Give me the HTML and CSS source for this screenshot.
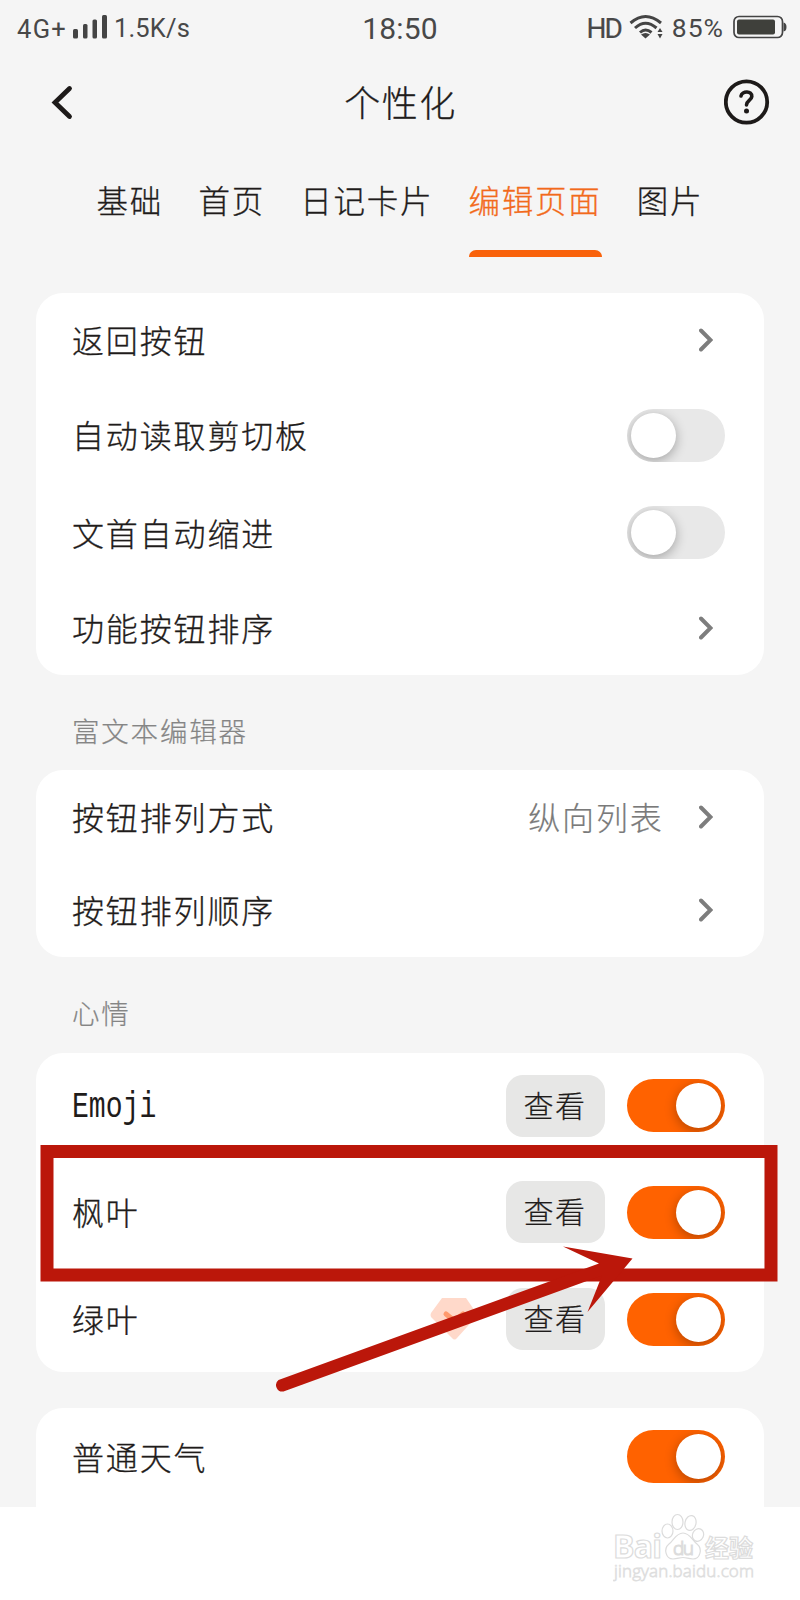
FILE: index.html
```html
<!DOCTYPE html>
<html lang="zh-CN">
<head>
<meta charset="utf-8">
<title>个性化</title>
<link rel="stylesheet" href="styles.css">
</head>
<body>
<main class="screen">
  <header class="status">
    <div class="status-left">
      <span class="network">4G+</span>
      <svg class="signal" width="35" height="24" viewBox="0 0 35 24"><g fill="#444"><rect x="0" y="14" width="5" height="9.500" rx="1.500"/><rect x="10" y="9" width="4.500" height="14.500" rx="1.500"/><rect x="19.500" y="4.500" width="4.500" height="19" rx="1.500"/><rect x="29" y="0" width="5" height="23.500" rx="1.500"/></g></svg>
      <span class="speed">1.5K/s</span>
    </div>
    <span class="clock">18:50</span>
    <div class="status-right">
      <span class="hd">HD</span>
      <svg class="wifi" width="34" height="26" viewBox="0 0 34 26"><g fill="none" stroke="#444" stroke-width="3"><path d="M1.500 9Q16.500-4 32 9"/><path d="M6 14Q16.500 4.500 27.500 14"/><path d="M11 18.500Q16.500 13.500 22.500 18.500"/></g><path d="M12 20.500Q16.500 17.500 21 20.500L16.500 24.500Z" fill="#444"/><path d="M28.500 18L31 14L33.500 18ZM28.500 20L31 24.500L33.500 20Z" fill="#444"/></svg>
      <span class="percent">85%</span>
      <svg class="battery" width="54" height="24" viewBox="0 0 54 24"><rect x="1" y="1.500" width="48.500" height="21" rx="5" fill="none" stroke="#444" stroke-width="1.700"/><rect x="4" y="4.500" width="38" height="15" rx="2" fill="#3f403b"/><path d="M50.500 7.500Q53.500 8 53.500 12T50.500 16.500Z" fill="#444"/></svg>
    </div>
  </header>

  <div class="titlebar">
    <svg width="24" height="36" viewBox="0 0 24 36"><path d="M18.500 4.500L4 18.500L18.500 32.500" fill="none" stroke="#1d1a19" stroke-width="4.800" stroke-linecap="round" stroke-linejoin="miter"/></svg>
    <h1 class="title">个性化</h1>
    <svg width="46" height="46" viewBox="0 0 46 46"><circle cx="22.500" cy="23" r="20.700" fill="none" stroke="#1d1a19" stroke-width="3.800"/><path d="M17 17C18 11.500 28.300 11.500 27.800 17.500C27.500 21.500 22.500 21.500 22.500 26" fill="none" stroke="#1d1a19" stroke-width="3.600" stroke-linecap="round"/><circle cx="22.500" cy="32" r="2.500" fill="#1d1a19"/></svg>
  </div>

  <nav class="tabs">
    <span class="tab">基础</span>
    <span class="tab">首页</span>
    <span class="tab">日记卡片</span>
    <span class="tab tab-active">编辑页面</span>
    <span class="tab">图片</span>
  </nav>

  <section class="card">
    <div class="row"><span class="label">返回按钮</span><svg class="chevron" viewBox="0 0 14 24"><path d="M2 2.500L11.500 12L2 21.500"/></svg></div>
    <div class="row row-switch"><span class="label">自动读取剪切板</span><span class="switch"></span></div>
    <div class="row row-switch"><span class="label">文首自动缩进</span><span class="switch"></span></div>
    <div class="row"><span class="label">功能按钮排序</span><svg class="chevron" viewBox="0 0 14 24"><path d="M2 2.500L11.500 12L2 21.500"/></svg></div>
  </section>

  <h2 class="section section-editor">富文本编辑器</h2>
  <section class="card">
    <div class="row"><span class="label">按钮排列方式</span><span class="value">纵向列表</span><svg class="chevron" viewBox="0 0 14 24"><path d="M2 2.500L11.500 12L2 21.500"/></svg></div>
    <div class="row"><span class="label">按钮排列顺序</span><svg class="chevron" viewBox="0 0 14 24"><path d="M2 2.500L11.500 12L2 21.500"/></svg></div>
  </section>

  <h2 class="section section-mood">心情</h2>
  <section class="card">
    <div class="row row-mood"><span class="label"><span class="latin">Emoji</span></span><span class="view">查看</span><span class="switch switch-on"></span></div>
    <div class="row row-mood"><span class="label">枫叶</span><span class="view">查看</span><span class="switch switch-on"></span></div>
    <div class="row row-mood"><span class="label">绿叶</span><svg class="gem" width="48" height="44" viewBox="0 0 48 44"><path d="M12 1H36L47 17Q47.500 19 46 20L27 41Q24.500 44 22 41L1 20Q0 18 1 16Z" fill="#ffd9ca"/><path d="M16 17L24.500 24L33 17" fill="none" stroke="#ff9a6d" stroke-width="5" stroke-linecap="round"/></svg><span class="view">查看</span><span class="switch switch-on"></span></div>
  </section>

  <section class="card card-weather">
    <div class="row row-switch"><span class="label">普通天气</span><span class="switch switch-on"></span></div>
  </section>
</main>

<svg class="annotation" width="800" height="260" viewBox="0 1140 800 260">
  <rect x="47" y="1151.500" width="724" height="123.500" fill="none" stroke="#bb170a" stroke-width="13"/>
  <path d="M278.500 1380L599 1263.500L563 1246.500L632.500 1258.500L587.500 1312L602 1275.500L283.500 1391.500A6.500 6.500 0 0 1 278.500 1380Z" fill="#bb170a"/>
</svg>

<svg class="watermark" width="160" height="80" viewBox="0 0 160 80">
  <g fill="#fff" stroke="#dcdcdc" stroke-width="1.200">
    <ellipse cx="54.500" cy="19" rx="5.500" ry="7"/>
    <ellipse cx="64.500" cy="10" rx="5.500" ry="7.500"/>
    <ellipse cx="77.500" cy="11" rx="5.500" ry="7.500" transform="rotate(12 77.500 11)"/>
    <ellipse cx="85" cy="23" rx="5.500" ry="6.500" transform="rotate(25 85 23)"/>
    <path d="M70 21C63 21 61 28 56 32C50 37 53 47 60 47C65 47 66 45.500 70 45.500S75 47 80 47C87 47 90 37 84 32C79 28 77 21 70 21Z"/>
    <text class="mark-text" x="0" y="46" font-size="32" font-weight="700" textLength="49">Bai</text>
    <text class="mark-text" x="60" y="43" font-size="19" textLength="21">du</text>
    <text class="mark-text" x="92" y="45" font-size="24" font-weight="700" textLength="48">经验</text>
  </g>
  <text class="mark-text" x="1" y="65" font-size="17" fill="#fff" stroke="#dedede" stroke-width=".8" textLength="140">jingyan.baidu.com</text>
</svg>
</body>
</html>
```

FILE: styles.css
```css
* { box-sizing: border-box; }
body {
  margin: 0;
  width: 800px;
  height: 1600px;
  position: relative;
  overflow: hidden;
  background: #fff;
  color: #1f1c1b;
  font-family: "Noto Sans CJK SC", sans-serif;
  font-weight: 300;
}
svg { display: block; flex: none; }
.screen { height: 1507px; overflow: hidden; background: #f5f5f5; }

.status {
  height: 56px;
  display: grid;
  grid-template-columns: 1fr auto 1fr;
  align-items: center;
  padding: 0 13px 0 17px;
  font-family: Roboto, sans-serif;
  font-weight: 400;
  color: #484848;
}
.status-left, .status-right { display: flex; align-items: center; }
.status-right { justify-content: flex-end; }
.network { font-size: 25.500px; letter-spacing: 1.300px; width: 56px; padding-top: 2px; white-space: nowrap; }
.signal { margin-top: -2px; }
.speed { font-size: 25.500px; margin-left: 6px; letter-spacing: .15px; }
.clock { font-size: 30px; letter-spacing: .2px; margin-right: 4px; }
.hd { font-size: 28px; letter-spacing: -2px; -webkit-text-stroke: .2px #484848; }
.wifi { margin-left: 8px; margin-top: -2px; }
.percent { font-size: 26.500px; margin-left: 9px; letter-spacing: 1px; padding-bottom: 1px; }
.battery { margin-left: 9px; margin-top: -3px; }

.titlebar {
  height: 92px;
  padding: 0 30px 0 51px;
  display: flex;
  align-items: center;
  justify-content: space-between;
}
.title {
  margin: 0 0 0 2px;
  padding-bottom: 3px;
  font-size: 36px;
  font-weight: 300;
  letter-spacing: 1.500px;
  line-height: 52px;
  -webkit-text-stroke: .3px;
}

.tabs { height: 109px; display: flex; justify-content: center; gap: 35.300px; }
.tab {
  font-size: 31.500px;
  letter-spacing: 1.750px;
  line-height: 44px;
  padding-top: 29px;
  -webkit-text-stroke: .3px;
}
.tab-active { color: #f26a1b; position: relative; }
.tab-active::after {
  content: "";
  position: absolute;
  left: 0;
  right: 0;
  bottom: 0;
  height: 7px;
  border-radius: 7px 7px 0 0;
  background: #f9620b;
}

.card { margin: 0 36px; background: #fff; border-radius: 27px; overflow: hidden; }
.tabs + .card { margin-top: 36px; }
.row { height: 93.500px; padding: 0 39.500px 0 36px; display: flex; align-items: center; }
.row-switch { height: 97.500px; }
.row-mood { height: 106.670px; }
.label { flex: 1; padding-bottom: 2px; font-size: 32px; letter-spacing: 1.850px; line-height: 46px; -webkit-text-stroke: .3px; }
.latin {
  display: inline-block;
  padding-top: 6px;
  font-family: "Liberation Mono", monospace;
  font-size: 36px;
  letter-spacing: 0;
  transform: scaleX(.78);
  transform-origin: left;
  -webkit-text-stroke: 0;
}
.value { padding-bottom: 2px; font-size: 32px; letter-spacing: 1.800px; color: #7a7a7a; margin-right: 35px; -webkit-text-stroke: .2px; }
.chevron { width: 14px; height: 24px; margin-right: 12px; fill: none; stroke: #7d7d7d; stroke-width: 4; stroke-linecap: round; }

.switch {
  width: 98px;
  height: 53px;
  padding: 4px;
  border-radius: 27px;
  background: #e8e8e8;
  display: flex;
  overflow: hidden;
}
.switch::before {
  content: "";
  width: 45px;
  height: 45px;
  border-radius: 50%;
  background: #fff;
  box-shadow: 0 3px 12px rgba(0, 0, 0, .3);
}
.switch-on { background: #ff6200; justify-content: flex-end; }

.section { margin: 0; padding-left: 72px; color: #858585; font-size: 27.500px; font-weight: 300; letter-spacing: 1.800px; -webkit-text-stroke: .2px; }
.section-editor { height: 95px; line-height: 110px; }
.section-mood { height: 95.500px; line-height: 111px; }

.view {
  width: 99px;
  height: 62px;
  margin-right: 22px;
  border-radius: 17px;
  background: #e7e7e6;
  font-size: 30px;
  letter-spacing: 1.500px;
  line-height: 58px;
  text-align: center;
  -webkit-text-stroke: .2px;
}
.gem { margin-right: 28px; }
.card-weather { margin-top: 35.500px; border-radius: 27px 27px 0 0; height: 110px; }

.annotation { position: absolute; left: 0; top: 1140px; }
.watermark { position: absolute; left: 613px; top: 1512px; }
.mark-text { font-family: "Open Sans", "Noto Sans CJK SC", sans-serif; }
```
